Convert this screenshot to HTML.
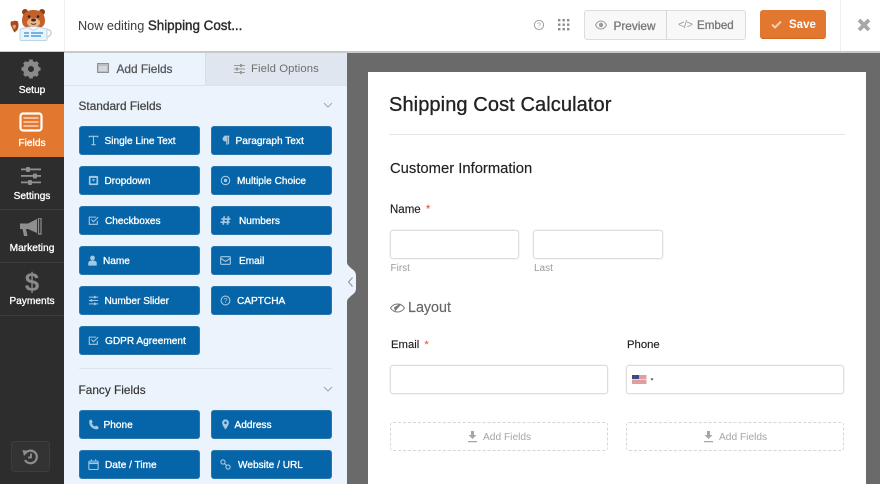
<!DOCTYPE html>
<html><head><meta charset="utf-8">
<style>
*{box-sizing:border-box;margin:0;padding:0}
html,body{width:880px;height:484px;overflow:hidden;background:#fff;font-family:"Liberation Sans",sans-serif}
.a{position:absolute}
#root{position:relative;width:880px;height:484px;overflow:hidden}
.side{position:absolute;left:0;width:64px;text-align:center;color:#fff;font-size:10.2px;-webkit-text-stroke:.3px #fff}
.side span{position:absolute;left:0;width:64px;text-align:center}
.btn{position:absolute;width:121px;height:29px;background:#0565a8;border:1px solid #2a77ae;border-radius:3px;color:#fff;font-size:10.1px;-webkit-text-stroke:.3px #fff;line-height:29px;white-space:nowrap}
.btn svg{position:absolute;left:8px;top:8px;width:11px;height:11px;fill:none;stroke:#a5c7e0;stroke-width:1.3;-webkit-text-stroke:0}
.btn span{position:absolute;top:0}
.t{position:absolute;white-space:nowrap}
.h{font-size:11.85px;color:#444;-webkit-text-stroke:.25px #444}
.inp{position:absolute;background:#fff;border:1px solid #dedede;border-radius:3px;box-shadow:0 0 0 .5px #eee}
.dash{position:absolute;border:1px dashed #d6d6d6;border-radius:3px;width:218px;height:29px;color:#a6a6a6;font-size:10.2px;line-height:29px}
</style></head><body><div id="root">
<!-- top bar -->
<div class="a" style="left:0;top:0;width:880px;height:52px;background:#fff;border-bottom:1px solid #c8c8c8"></div>
<div class="a" style="left:64px;top:0;width:1px;height:51px;background:#efefef"></div>
<div class="a" style="left:840px;top:0;width:1px;height:51px;background:#efefef"></div>
<!-- logo -->
<svg class="a" style="left:0;top:0" width="64" height="52" viewBox="0 0 64 52">
<path d="M46 30c4-1 5 1 5 3s-2 4-5 4" fill="none" stroke="#c9d6dc" stroke-width="1.600"/>
<path d="M11 26c-1-3 0-5 1-5l1 .500 1.500-1 1.500.500 1.500 0 .800 2c.500 3 .200 6-2 8l-2 1.500z" fill="#a5491f"/>
<path d="M12.500 25.500c1-1 3-1 3.500 0 0 2-1 3.500-1.800 3.500s-1.700-1.500-1.700-3.500z" fill="#dd9a6c"/>
<circle cx="25" cy="12" r="3" fill="#8f3e18"/><circle cx="42" cy="12" r="3" fill="#8f3e18"/>
<path d="M22 21c0-8 5-11 11.500-11S45 13 45 21c0 5-4 8-11.500 8S22 26 22 21z" fill="#c4602a"/>
<ellipse cx="33.500" cy="22.500" rx="6.500" ry="4.500" fill="#e9b68a"/>
<circle cx="29" cy="16.500" r="1.300" fill="#2c2016"/><circle cx="38" cy="16.500" r="1.300" fill="#2c2016"/>
<ellipse cx="33.500" cy="20" rx="2.400" ry="1.500" fill="#3d2418"/>
<path d="M31 23.500c2 1.200 3.500 1.200 5 0" stroke="#7b2f17" fill="none"/>
<path d="M20 29l9-2h9l9 2v10c0 1-1 1.500-2 1.500H22c-1 0-2-.500-2-1.500z" fill="#eaf3fa" stroke="#b9d4e6"/>
<path d="M28 27l5.500 3.500L39 27" fill="#fff" stroke="#b9d4e6"/>
<path d="M24 33h5M31 33h12M24 36h5M31 36h10" stroke="#2f8bd0" stroke-width="1.300"/>
</svg>
<div class="t" style="left:78px;top:18px;font-size:12.7px;color:#3c3c3c">Now editing <span style="color:#2b2b2b;font-size:13.4px;-webkit-text-stroke:.4px #2b2b2b">Shipping Cost...</span></div>
<!-- help, grid -->
<svg class="a" style="left:533px;top:19px" width="12" height="12" viewBox="0 0 12 12"><circle cx="6" cy="6" r="4.600" fill="none" stroke="#a0a0a0"/><text x="6" y="8.400" font-size="7" font-family="Liberation Sans" text-anchor="middle" fill="#a0a0a0">?</text></svg>
<svg class="a" style="left:558px;top:19px" width="12" height="12" fill="#8c8c8c"><rect width="2.400" height="2.400" x="0" y="0"/><rect width="2.400" height="2.400" x="4.500" y="0"/><rect width="2.400" height="2.400" x="9" y="0"/><rect width="2.400" height="2.400" x="0" y="4.500"/><rect width="2.400" height="2.400" x="4.500" y="4.500"/><rect width="2.400" height="2.400" x="9" y="4.500"/><rect width="2.400" height="2.400" x="0" y="9"/><rect width="2.400" height="2.400" x="4.500" y="9"/><rect width="2.400" height="2.400" x="9" y="9"/></svg>
<!-- preview embed -->
<div class="a" style="left:584px;top:10px;width:162px;height:30px;background:#f8f8f8;border:1px solid #dcdcdc;border-radius:3px"></div>
<div class="a" style="left:666px;top:10px;width:1px;height:30px;background:#d8d8d8"></div>
<svg class="a" style="left:595px;top:20px" width="12" height="10" viewBox="0 0 12 10"><path d="M.5 5C2 2 4 1 6 1s4 1 5.500 4C10 8 8 9 6 9S2 8 .5 5z" fill="none" stroke="#9a9a9a"/><circle cx="6" cy="5" r="2.200" fill="#9a9a9a"/></svg>
<div class="t" style="left:613.500px;top:18.500px;font-size:11.800px;color:#777;-webkit-text-stroke:.3px #777">Preview</div>
<div class="t" style="left:678px;top:18.500px;font-size:11px;color:#9a9a9a;letter-spacing:-.5px">&lt;/&gt;</div>
<div class="t" style="left:697px;top:18.500px;font-size:11.600px;color:#777;-webkit-text-stroke:.3px #777">Embed</div>
<!-- save -->
<div class="a" style="left:760px;top:10px;width:66px;height:29px;background:#e27730;border-radius:3px;border-bottom:1px solid #cd6622"></div>
<svg class="a" style="left:771px;top:20px" width="11" height="9" viewBox="0 0 11 9"><path d="M1 4.500l3 3 6-6" fill="none" stroke="#f6cfb4" stroke-width="2"/></svg>
<div class="t" style="left:789px;top:18.500px;font-size:11.500px;font-weight:bold;color:#fff">Save</div>
<!-- close -->
<svg class="a" style="left:857px;top:18px" width="14" height="14" viewBox="0 0 14 14"><path d="M2 2l10 10M12 2L2 12" stroke="#a8a8a8" stroke-width="3.800"/></svg>

<!-- sidebar -->
<div class="a" style="left:0;top:52px;width:64px;height:432px;background:#2d2d2d"></div>
<div class="a" style="left:0;top:104px;width:64px;height:53px;background:#e27730"></div>
<div class="a" style="left:0;top:209px;width:64px;height:1px;background:#3c3c3c"></div>
<div class="a" style="left:0;top:262px;width:64px;height:1px;background:#3c3c3c"></div>
<div class="a" style="left:0;top:315px;width:64px;height:1px;background:#3c3c3c"></div>
<div class="side" style="top:52px;height:52px">
<svg class="a" style="left:21px;top:7px" width="20" height="20" viewBox="0 0 20 20"><circle cx="10" cy="10" r="5.500" fill="none" stroke="#8a8a8a" stroke-width="5"/><path d="M10 .500v3M10 16.500v3M.5 10h3M16.500 10h3M3.300 3.300l2.100 2.100M14.600 14.600l2.100 2.100M16.700 3.300l-2.100 2.100M5.400 14.600l-2.100 2.100" stroke="#8a8a8a" stroke-width="3.600"/></svg>
<span style="top:33px">Setup</span></div>
<div class="side" style="top:104px;height:53px">
<svg class="a" style="left:19px;top:8px" width="24" height="20" viewBox="0 0 24 20"><rect x="1.500" y="1.500" width="21" height="17" rx="2.500" fill="#e27730" stroke="#fff" stroke-width="2.200"/><path d="M4.500 6h15M4.500 10h15M4.500 14h15" stroke="#f9c8a5" stroke-width="1.800"/></svg>
<span style="top:34px">Fields</span></div>
<div class="side" style="top:157px;height:53px">
<svg class="a" style="left:21px;top:10px" width="20" height="18" viewBox="0 0 20 18" fill="#8f8f8f"><rect y="1.500" width="20" height="1.800"/><rect y="8" width="20" height="1.800"/><rect y="14.500" width="20" height="1.800"/><rect x="5" y="0" width="4" height="5" rx="1"/><rect x="12" y="6.500" width="4" height="5" rx="1"/><rect x="7" y="13" width="4" height="5" rx="1"/></svg>
<span style="top:34px">Settings</span></div>
<div class="side" style="top:210px;height:53px">
<svg class="a" style="left:20px;top:8px" width="22" height="20" viewBox="0 0 22 20" fill="#8f8f8f"><path d="M0 5.500h8L17 1v14L8 11H6l1.500 7H4L2.500 11H0z"/><path d="M18.500 0h2.500v16h-2.500z" fill="none" stroke="#8f8f8f" stroke-width="1.200"/></svg>
<span style="top:33px">Marketing</span></div>
<div class="side" style="top:263px;height:53px">
<div class="a" style="left:0;top:6px;width:64px;text-align:center;font-size:26px;font-weight:bold;color:#8a8a8a;-webkit-text-stroke:0;line-height:26px">$</div>
<span style="top:33px">Payments</span></div>
<div class="a" style="left:11px;top:441px;width:39px;height:31px;border:1px solid #3d3d3d;border-radius:3px;background:#333"></div>
<svg class="a" style="left:22px;top:449px" width="17" height="16" viewBox="0 0 17 16"><path d="M3.200 4.500A6.300 6.300 0 1 1 3 11" fill="none" stroke="#8f8f8f" stroke-width="2.200"/><path d="M.5 1l6 1-4.500 5z" fill="#8f8f8f"/><path d="M9 4.500V8.500H6" fill="none" stroke="#8f8f8f" stroke-width="1.800"/></svg>

<!-- panel -->
<div class="a" style="left:64px;top:52px;width:283px;height:432px;background:#ebf3fc"></div>
<div class="a" style="left:64px;top:85px;width:283px;height:1px;background:#dde4ee"></div>
<div class="a" style="left:205px;top:52px;width:142px;height:33px;background:#dfe6ef;border-left:1px solid #d5dde8"></div>
<svg class="a" style="left:97px;top:63px" width="12" height="10" viewBox="0 0 12 10"><rect x=".5" y=".5" width="11" height="9" fill="#b9bec4" stroke="#8c9298"/><rect x="2" y="3" width="8" height="5" fill="#d4d8dc"/></svg>
<div class="t h" style="left:116.500px;top:62px;color:#555;-webkit-text-stroke:.25px #555">Add Fields</div>
<svg class="a" style="left:234px;top:64px" width="11" height="10" viewBox="0 0 11 10" fill="#999"><rect y="1" width="11" height="1"/><rect y="4.500" width="11" height="1"/><rect y="8" width="11" height="1"/><rect x="6" y="0" width="2" height="3"/><rect x="2" y="3.500" width="2" height="3"/><rect x="6" y="7" width="2" height="3"/></svg>
<div class="t" style="left:251px;top:62.500px;font-size:11.300px;color:#6e6e6e;letter-spacing:.1px">Field Options</div>

<div class="t h" style="left:78.500px;top:98.500px">Standard Fields</div>
<svg class="a" style="left:323px;top:102px" width="10" height="6"><path d="M1 1l4 4 4-4" fill="none" stroke="#a0a8b2"/></svg>

<div class="btn" style="left:78.500px;top:126px"><svg viewBox="0 0 13 13"><path d="M1.500 3V1.500h10V3M6.500 1.500v10M4 11.500h5"/></svg><span style="left:25px">Single Line Text</span></div>
<div class="btn" style="left:211px;top:126px"><svg viewBox="0 0 13 13"><path d="M5 1.500h6M8 1.500v10M10 2v9" stroke-width="1.500"/><path d="M6 1.500a3 3 0 0 0 0 6h2v-6z" fill="#a5c7e0" stroke="none"/></svg><span style="left:23.500px">Paragraph Text</span></div>
<div class="btn" style="left:78.500px;top:166px"><svg viewBox="0 0 13 13"><rect x="1" y="1" width="11" height="11" rx="1.500" fill="#a5c7e0" stroke="none"/><rect x="3" y="3.500" width="7" height="6.500" fill="#0565a8" stroke="none"/><path d="M4.500 5h4L6.500 7.800z" fill="#a5c7e0" stroke="none"/></svg><span style="left:25px">Dropdown</span></div>
<div class="btn" style="left:211px;top:166px"><svg viewBox="0 0 13 13"><circle cx="6.500" cy="6.500" r="5"/><circle cx="6.500" cy="6.500" r="2" fill="#a5c7e0" stroke="none"/></svg><span style="left:25px">Multiple Choice</span></div>
<div class="btn" style="left:78.500px;top:206px"><svg viewBox="0 0 13 13"><path d="M11 7v4H1.500V2.500h8"/><path d="M4 5.500l2.500 2.500 5.500-5.500"/></svg><span style="left:25.500px">Checkboxes</span></div>
<div class="btn" style="left:211px;top:206px"><svg viewBox="0 0 13 13"><path d="M5 1.500l-1.200 10M10 1.500l-1.200 10M1.500 4.800h11M.5 8.500h11" stroke-width="2"/></svg><span style="left:27px">Numbers</span></div>
<div class="btn" style="left:78.500px;top:246px"><svg viewBox="0 0 13 13" style="left:7px"><circle cx="6.500" cy="3.500" r="2.800" fill="#a5c7e0" stroke="none"/><path d="M1.500 12.500V9.500c0-2 1.800-3 5-3s5 1 5 3v3z" fill="#a5c7e0" stroke="none"/></svg><span style="left:23.500px">Name</span></div>
<div class="btn" style="left:211px;top:246px"><svg viewBox="0 0 13 13"><rect x=".8" y="2" width="11.400" height="9" rx="1"/><path d="M.8 4l5.700 3.500L12.200 4"/></svg><span style="left:27px">Email</span></div>
<div class="btn" style="left:78.500px;top:286px"><svg viewBox="0 0 13 13" stroke-width="1"><path d="M1 2.500h11M1 6.500h11M1 10.500h11"/><path d="M8 1v3M4 5v3M8 9v3" stroke-width="2"/></svg><span style="left:25px">Number Slider</span></div>
<div class="btn" style="left:211px;top:286px"><svg viewBox="0 0 13 13"><circle cx="6.500" cy="6.500" r="5.200"/><text x="6.500" y="9.500" font-size="8.500" font-family="Liberation Sans" text-anchor="middle" fill="#a5c7e0" stroke="none">?</text></svg><span style="left:25px">CAPTCHA</span></div>
<div class="btn" style="left:78.500px;top:326px"><svg viewBox="0 0 13 13"><path d="M11 7v4H1.500V2.500h8"/><path d="M4 5.500l2.500 2.500 5.500-5.500"/></svg><span style="left:25.500px">GDPR Agreement</span></div>

<div class="a" style="left:79px;top:368px;width:253px;height:1px;background:#dde4ee"></div>
<div class="t h" style="left:78.500px;top:382.500px;color:#333;-webkit-text-stroke:.15px #333">Fancy Fields</div>
<svg class="a" style="left:323px;top:386px" width="10" height="6"><path d="M1 1l4 4 4-4" fill="none" stroke="#a0a8b2"/></svg>

<div class="btn" style="left:78.500px;top:410px"><svg viewBox="0 0 13 13"><path d="M2 1c-1.500 3 0 7 2.500 9s5 2.500 7.500 2l.5-2.500-3-1.800-1.500 1.200C7 8.500 5 6.500 4.500 5l1.200-1.300L4 .8z" fill="#a5c7e0" stroke="none"/></svg><span style="left:24px">Phone</span></div>
<div class="btn" style="left:211px;top:410px"><svg viewBox="0 0 13 13"><path d="M6.500 .5a4 4 0 0 0-4 4c0 3 4 8 4 8s4-5 4-8a4 4 0 0 0-4-4z" fill="#a5c7e0" stroke="none"/><circle cx="6.500" cy="4.500" r="1.500" fill="#0565a8" stroke="none"/></svg><span style="left:22.500px">Address</span></div>
<div class="btn" style="left:78.500px;top:450px"><svg viewBox="0 0 13 13"><rect x="1" y="2.500" width="11" height="10" rx="1"/><path d="M1 5h11" stroke-width="2"/><path d="M4 .5v2.500M9 .5v2.500"/></svg><span style="left:25.500px">Date / Time</span></div>
<div class="btn" style="left:211px;top:450px"><svg viewBox="0 0 13 13" stroke-width="1.500"><circle cx="3.500" cy="3.500" r="2.500"/><circle cx="9.500" cy="9.500" r="2.500"/><path d="M5.300 5.300l2.400 2.400"/></svg><span style="left:26px">Website / URL</span></div>

<!-- canvas -->
<div class="a" style="left:347px;top:52px;width:533px;height:432px;background:#6a6a6a"></div>
<div class="a" style="left:64px;top:52px;width:816px;height:1px;background:#c9c9c9"></div>
<!-- collapse tab -->
<svg class="a" style="left:345px;top:262px" width="13" height="40" viewBox="0 0 13 40"><path d="M0 0h2c0 3 2 4 5 7 3 2 4 4 4 7v12c0 3-1 5-4 7-3 3-5 4-5 7H0z" fill="#ebf3fc"/><path d="M7.500 15.500L3.500 20l4 4.500" fill="none" stroke="#8a95a2" stroke-width="1.100"/></svg>
<!-- form -->
<div class="a" style="left:368px;top:72px;width:498px;height:412px;background:#fff"></div>
<div class="t" style="left:389px;top:93.500px;font-size:20px;color:#222;-webkit-text-stroke:.3px #222;letter-spacing:.1px">Shipping Cost Calculator</div>
<div class="a" style="left:389px;top:134px;width:456px;height:1px;background:#e8e8e8"></div>
<div class="t" style="left:390px;top:161px;font-size:14.800px;color:#222;-webkit-text-stroke:.15px #222">Customer Information</div>
<div class="t" style="left:390px;top:203.500px;font-size:11.500px;color:#222;-webkit-text-stroke:.15px #222">Name <span style="color:#e2492f;margin-left:2px;-webkit-text-stroke:0">*</span></div>
<div class="inp" style="left:390px;top:230px;width:129px;height:29px"></div>
<div class="inp" style="left:533px;top:230px;width:130px;height:29px"></div>
<div class="t" style="left:390.500px;top:262.500px;font-size:10px;color:#9a9a9a">First</div>
<div class="t" style="left:534px;top:262.500px;font-size:10px;color:#9a9a9a">Last</div>
<svg class="a" style="left:390px;top:302px" width="15" height="12" viewBox="0 0 15 12"><path d="M.5 6C2.500 3 5 2 7.500 2s5 1 7 4c-2 3-4.500 4-7 4S2.500 9 .5 6z" fill="none" stroke="#777"/><path d="M4 5.500l6-4 1 1-6 7z" fill="#777"/></svg>
<div class="t" style="left:408px;top:300px;font-size:14.300px;color:#666;-webkit-text-stroke:.15px #666">Layout</div>
<div class="t" style="left:391px;top:338.500px;font-size:11.300px;color:#222;-webkit-text-stroke:.15px #222">Email <span style="color:#e2492f;margin-left:2px;-webkit-text-stroke:0">*</span></div>
<div class="t" style="left:627px;top:338.500px;font-size:11.300px;color:#222;-webkit-text-stroke:.15px #222">Phone</div>
<div class="inp" style="left:390px;top:365px;width:218px;height:29px"></div>
<div class="inp" style="left:626px;top:365px;width:218px;height:29px"></div>
<svg class="a" style="left:632px;top:375px" width="22" height="9"><rect width="14.500" height="9" fill="#e09ea0"/><rect y="4" width="14.500" height="1" fill="#eed4d4"/><rect width="7" height="4" fill="#3f4a85"/><path d="M18.500 3.500h3l-1.500 2z" fill="#333"/></svg>
<div class="dash" style="left:390px;top:422px"><svg class="a" style="left:76px;top:8px" width="11" height="12" viewBox="0 0 11 12"><path d="M4 0h3v4h2.500L5.500 8 1.500 4H4zM1 10h9v1.200H1z" fill="#a6a6a6"/></svg><span class="a" style="left:92px;top:0;white-space:nowrap">Add Fields</span></div>
<div class="dash" style="left:626px;top:422px"><svg class="a" style="left:76px;top:8px" width="11" height="12" viewBox="0 0 11 12"><path d="M4 0h3v4h2.500L5.500 8 1.500 4H4zM1 10h9v1.200H1z" fill="#a6a6a6"/></svg><span class="a" style="left:92px;top:0;white-space:nowrap">Add Fields</span></div>
</div></body></html>
